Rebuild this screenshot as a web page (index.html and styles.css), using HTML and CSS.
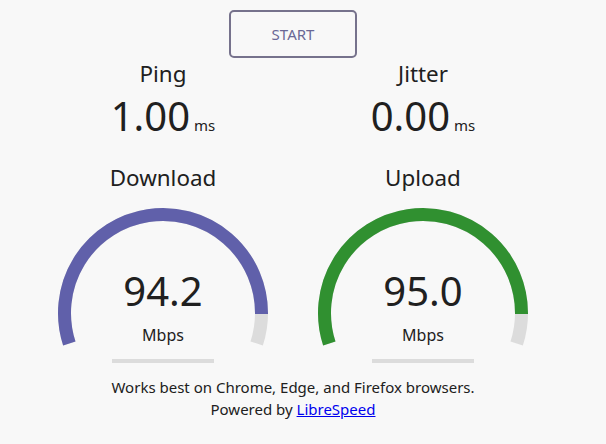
FILE: index.html
```html
<!DOCTYPE html>
<html>
<head>
<meta charset="utf-8">
<title>LibreSpeed</title>
<link rel="stylesheet" href="styles.css">
</head>
<body>
<div class="page">
  <div class="start-btn">START</div>

  <div class="row">
    <div class="stat">
      <div class="stat-name">Ping</div>
      <div class="stat-value"><span class="num">1.00</span><span class="unit">ms</span></div>
    </div>
    <div class="stat">
      <div class="stat-name">Jitter</div>
      <div class="stat-value"><span class="num">0.00</span><span class="unit">ms</span></div>
    </div>
  </div>

  <div class="row gauges">
    <div class="test-area">
      <div class="test-name">Download</div>
      <div class="meter">
        <svg class="meter-svg" width="256" height="183" viewBox="0 0 256 183">
          <path d="M34.32 150.44 A98.5 98.5 0 1 1 221.68 150.44" class="arc-bg"/>
          <path d="M34.32 150.44 A98.5 98.5 0 1 1 226.49 121.03" class="arc-dl"/>
          <rect x="77" y="166" width="102" height="4" class="prog"/>
        </svg>
        <div class="meter-text">94.2</div>
        <div class="meter-unit">Mbps</div>
      </div>
    </div>
    <div class="test-area">
      <div class="test-name">Upload</div>
      <div class="meter">
        <svg class="meter-svg" width="256" height="183" viewBox="0 0 256 183">
          <path d="M34.32 150.44 A98.5 98.5 0 1 1 221.68 150.44" class="arc-bg"/>
          <path d="M34.32 150.44 A98.5 98.5 0 1 1 226.49 121.03" class="arc-ul"/>
          <rect x="77" y="166" width="102" height="4" class="prog"/>
        </svg>
        <div class="meter-text">95.0</div>
        <div class="meter-unit">Mbps</div>
      </div>
    </div>
  </div>

  <div class="footer">
    <div>Works best on Chrome, Edge, and Firefox browsers.</div>
    <div>Powered by <a href="#" class="link">LibreSpeed</a></div>
  </div>
</div>
</body>
</html>
```

FILE: styles.css
```css
html, body {
  margin: 0;
  padding: 0;
  background: #f8f8f8;
}
body {
  font-family: "Noto Sans", "Open Sans", sans-serif;
  color: #202020;
}
.page {
  width: 586px;
  display: flex;
  flex-direction: column;
  align-items: center;
}
.start-btn {
  margin-top: 10px;
  width: 128px;
  height: 48px;
  box-sizing: border-box;
  border: 2px solid #76728c;
  border-radius: 5px;
  color: #6a6896;
  font-size: 15px;
  line-height: 44px;
  text-align: center;
}
.row {
  display: flex;
  gap: 4px;
}
.stat {
  width: 256px;
  text-align: center;
}
.stat-name {
  font-size: 22.4px;
  line-height: 30px;
  margin-top: 1px;
}
.stat-value {
  margin-top: 3px;
  line-height: 48px;
  height: 48px;
}
.num {
  font-size: 40px;
}
.unit {
  font-size: 15px;
  margin-left: 4px;
}
.gauges {
  margin-top: 23px;
}
.test-area {
  width: 256px;
  text-align: center;
}
.test-name {
  font-size: 22.4px;
  line-height: 30px;
}
.meter {
  position: relative;
  height: 183px;
}
.meter-svg {
  display: block;
}
.arc-bg {
  fill: none;
  stroke: #dcdcdc;
  stroke-width: 13;
}
.arc-dl {
  fill: none;
  stroke: #6060aa;
  stroke-width: 13;
}
.arc-ul {
  fill: none;
  stroke: #309030;
  stroke-width: 13;
}
.prog {
  fill: #dcdcdc;
}
.meter-text {
  position: absolute;
  left: 0;
  top: 74px;
  width: 100%;
  font-size: 40px;
  line-height: 48px;
}
.meter-unit {
  position: absolute;
  left: 0;
  top: 130px;
  width: 100%;
  font-size: 16px;
  line-height: 24px;
}
.footer {
  margin-top: 0;
  font-size: 15px;
  line-height: 22px;
  text-align: center;
}
.link {
  color: #0000ee;
  text-decoration: underline;
}
```
